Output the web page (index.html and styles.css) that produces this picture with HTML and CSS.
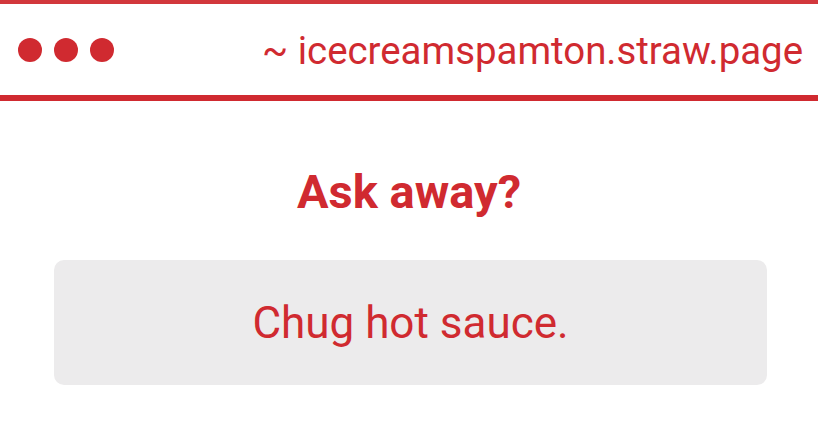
FILE: index.html
```html
<!DOCTYPE html>
<html lang="en">
<head>
  <meta charset="UTF-8">
  <title>icecreamspamton.straw.page</title>
  <meta name="viewport" content="width=device-width, initial-scale=1.0"/>
  <link rel="stylesheet" href="styles.css">
</head>
<body>
  <div class="bar">
    <div class="dots">
      <span class="dot"></span>
      <span class="dot"></span>
      <span class="dot"></span>
    </div>
    <div class="url">~ icecreamspamton.straw.page</div>
  </div>

  <h1 class="title">Ask away?</h1>

  <div class="answer">Chug hot sauce.</div>
</body>
</html>
```

FILE: styles.css
```css
body {
  margin: 0;
  font-family: Roboto, 'Noto Sans', sans-serif;
  background: #fff;
  color: #d02a30;
}
.bar {
  display: flex;
  align-items: center;
  justify-content: space-between;
  height: 91px;
  border-top: 4px solid #d2373c;
  border-bottom: 6px solid #d02a30;
  padding: 0 15px 0 18px;
}
.dots {
  display: flex;
  gap: 12px;
}
.dot {
  width: 24px;
  height: 24px;
  border-radius: 50%;
  background: #d02a30;
}
.url {
  font-size: 38.4px;
  line-height: 44px;
  padding-top: 2px;
}
.title {
  margin: 63px 0 0;
  text-align: center;
  font-size: 47px;
  font-weight: bold;
  line-height: 56px;
}
.answer {
  margin: 40px 51px 0 54px;
  height: 125px;
  display: flex;
  align-items: center;
  justify-content: center;
  background: #ecebec;
  border-radius: 10px;
  font-size: 44px;
}
```
